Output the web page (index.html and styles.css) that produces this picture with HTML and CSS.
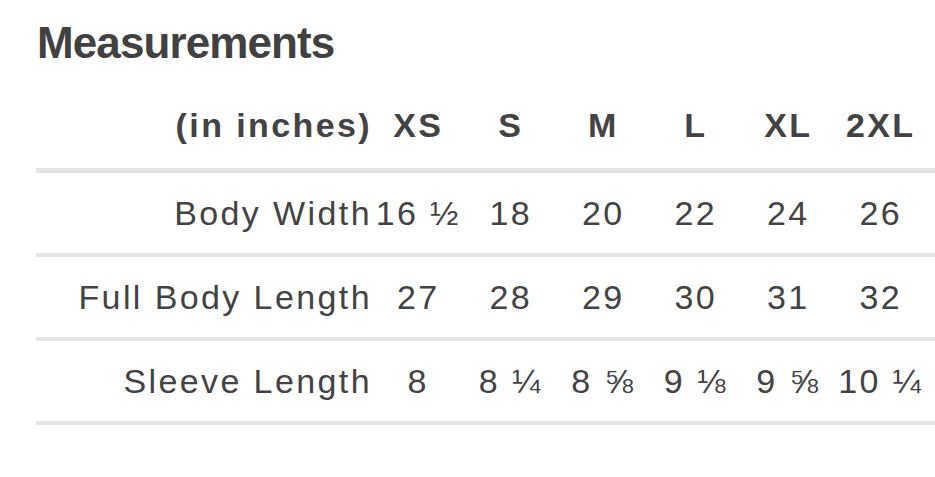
FILE: index.html
```html
<!DOCTYPE html>
<html lang="en">
<head>
<meta charset="utf-8">
<title>Measurements</title>
<link rel="stylesheet" href="styles.css">
</head>
<body>
<section class="sizes">
  <h2 class="title">Measurements</h2>
  <table class="chart">
    <colgroup>
      <col class="col-label">
      <col class="col-size"><col class="col-size"><col class="col-size">
      <col class="col-size"><col class="col-size"><col class="col-size">
      <col class="col-rest">
    </colgroup>
    <thead>
      <tr>
        <th class="label">(in inches)</th>
        <th>XS</th><th>S</th><th>M</th><th>L</th><th>XL</th><th>2XL</th><th></th>
      </tr>
    </thead>
    <tbody>
      <tr>
        <td class="label">Body Width</td>
        <td>16 ½</td><td>18</td><td>20</td><td>22</td><td>24</td><td>26</td><td></td>
      </tr>
      <tr>
        <td class="label">Full Body Length</td>
        <td>27</td><td>28</td><td>29</td><td>30</td><td>31</td><td>32</td><td></td>
      </tr>
      <tr>
        <td class="label">Sleeve Length</td>
        <td>8</td><td>8 ¼</td><td>8 ⅝</td><td>9 ⅛</td><td>9 ⅝</td><td>10 ¼</td><td></td>
      </tr>
    </tbody>
  </table>
</section>
</body>
</html>
```
FILE: styles.css
```css
html, body {
  margin: 0;
  padding: 0;
  background: #ffffff;
}

body {
  font-family: "Liberation Sans", Arial, Helvetica, sans-serif;
  color: #434343;
}

.sizes {
  padding-left: 36px;
  padding-top: 17px;
}

.title {
  margin: 0;
  padding-left: 1px;
  font-size: 44px;
  line-height: 52px;
  font-weight: bold;
  letter-spacing: -0.9px;
  color: #414141;
}

.chart {
  margin-top: 37px;
  width: 901px;
  border-collapse: collapse;
  table-layout: fixed;
  font-size: 34px;
  line-height: 39px;
  letter-spacing: 2.4px;
}

.col-label { width: 336px; }
.col-size { width: 92.5px; }

.chart th {
  font-weight: bold;
  text-align: center;
  padding: 0 0 23px 0;
  border-bottom: 5px solid #e2e2e4;
  white-space: nowrap;
}

.chart td {
  text-align: center;
  padding: 0;
  height: 80px;
  vertical-align: middle;
  border-bottom: 4px solid #e4e4e6;
  white-space: nowrap;
}

.chart .label {
  text-align: right;
  padding-right: 0;
}
```
